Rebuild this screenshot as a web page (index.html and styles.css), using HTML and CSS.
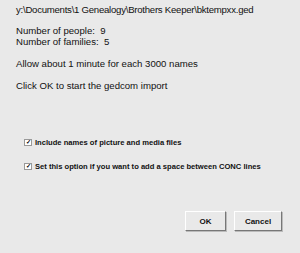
FILE: index.html
```html
<!DOCTYPE html>
<html lang="en">
<head>
    <meta charset="UTF-8">
    <title>Gedcom Import</title>
    <link rel="stylesheet" href="styles.css">
</head>
<body>
    <div class="dialog">
        <p class="path">y:\Documents\1 Genealogy\Brothers Keeper\bktempxx.ged</p>
        <p class="counts">Number of people:&nbsp; 9<br>Number of families:&nbsp; 5</p>
        <p>Allow about 1 minute for each 3000 names</p>
        <p>Click OK to start the gedcom import</p>

        <label class="option"><span class="check">&#10003;</span>Include names of picture and media files</label>
        <label class="option"><span class="check">&#10003;</span>Set this option if you want to add a space between CONC lines</label>

        <div class="buttons">
            <button class="btn">OK</button>
            <button class="btn">Cancel</button>
        </div>
    </div>
</body>
</html>
```

FILE: styles.css
```css
body { margin: 0; background: #e9e9e9; font-family: Arial, "Liberation Sans", sans-serif; color: #111; }
.dialog { width: 300px; height: 253px; padding: 4px 0 0 16px; box-sizing: border-box; }
p { margin: 0 0 11px 0; font-size: 9.6px; line-height: 11px; }
.path { margin-bottom: 10px; letter-spacing: -0.25px; }
.option { display: flex; align-items: center; font-size: 7.6px; font-weight: bold; margin-left: 8px; height: 10px; }
.option:first-of-type { margin-top: 46px; }
.option + .option { margin-top: 14px; }
.check { width: 6px; height: 5px; border: 1px solid #999; background: #fff; font-size: 6px; line-height: 5px; text-align: center; margin-right: 3px; color: #000; }
.buttons { display: flex; justify-content: flex-end; gap: 8px; margin-top: 40px; padding-right: 18px; }
.btn { width: 41px; height: 20px; padding: 0; background: #e9e9e9; font-family: Arial, "Liberation Sans", sans-serif; font-size: 8px; font-weight: bold; color: #111;
       border: 1px solid; border-color: #fff #777 #777 #fff; box-shadow: 1px 1px 0 #bbb; }
.btn + .btn { width: 48px; }
```
